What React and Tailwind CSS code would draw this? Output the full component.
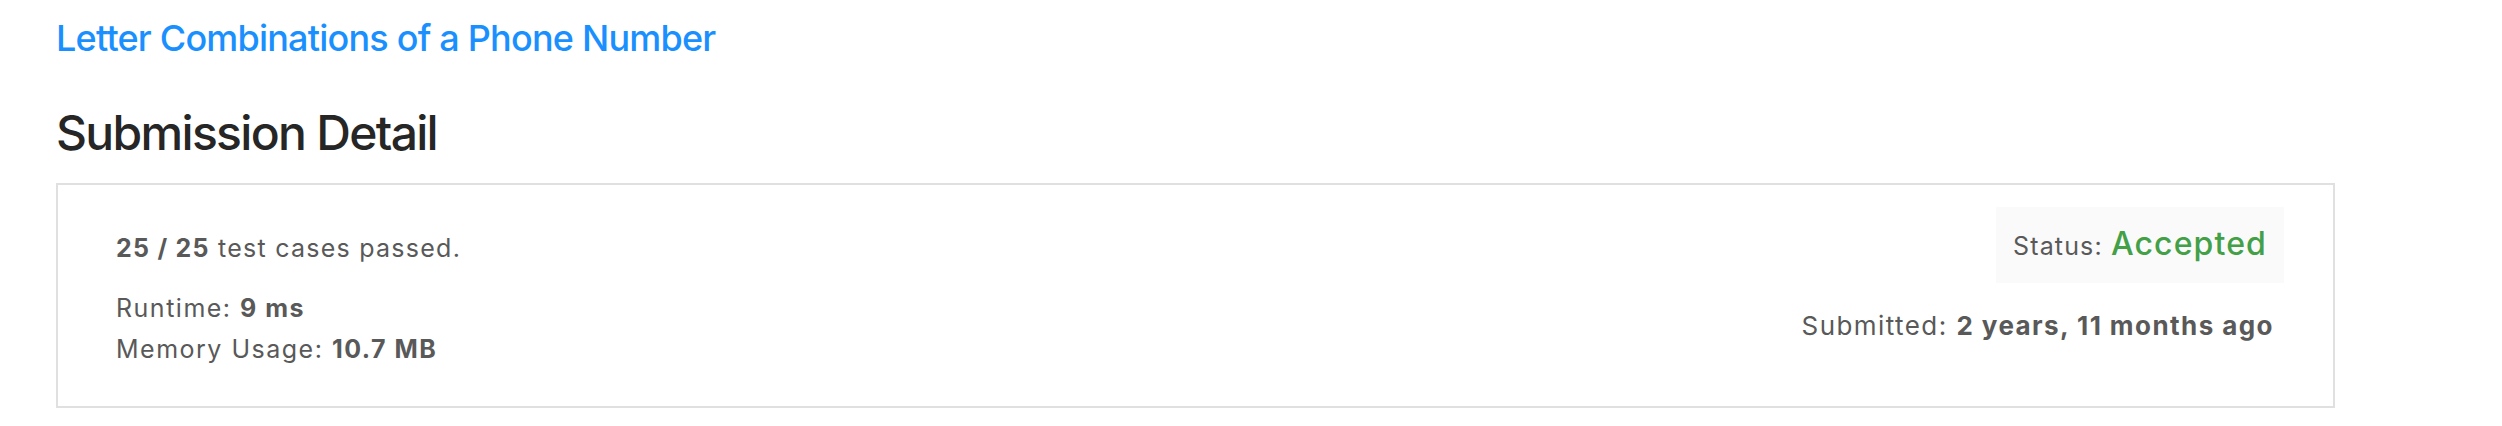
import React from "react";

const submission = {
  problem: "Letter Combinations of a Phone Number",
  passed: 25,
  total: 25,
  runtime: "9 ms",
  memory: "10.7 MB",
  status: "Accepted",
  submitted: "2 years, 11 months ago",
};

export default function App() {
  return (
    <div className="min-h-[426px] w-[2502px] bg-white pt-4 pl-[56px] font-['Inter','Liberation_Sans',sans-serif]">
      {/* Problem link */}
      <a
        href="#"
        className="block text-[36px] leading-[44px] font-medium tracking-[-0.022em] text-[#1a90ff]"
      >
        {submission.problem}
      </a>

      {/* Heading */}
      <h1 className="mt-[44px] text-[48px] leading-[58px] font-medium tracking-[-0.035em] text-[#262626]">
        Submission Detail
      </h1>

      {/* Detail panel */}
      <div className="mt-[21px] flex w-[2279px] items-start justify-between border-2 border-[#e0e0e0] pt-[22px] pr-[49px] pb-[36px] pl-[58px] text-[#595959]">
        <div className="mt-[25px]">
          <div className="text-[25px] leading-[32px] tracking-[0.05em]">
            <span className="font-bold">
              {submission.passed} / {submission.total}
            </span>{" "}
            test cases passed.
          </div>
          <div className="mt-[24px] text-[25px] leading-[41px] tracking-[0.06em]">
            <div>
              Runtime: <span className="font-bold">{submission.runtime}</span>
            </div>
            <div>
              Memory Usage: <span className="font-bold">{submission.memory}</span>
            </div>
          </div>
        </div>

        <div className="flex flex-col items-end">
          <div className="flex h-[76px] items-center bg-[#fafafa] px-[17px]">
            <div className="text-[25px] leading-[40px] tracking-[0.045em]">
              Status:{" "}
              <span className="text-[32px] font-medium text-[#43a047]">
                {submission.status}
              </span>
            </div>
          </div>
          <div className="mt-[25px] pr-[10px] text-[26px] leading-[36px] tracking-[0.055em]">
            Submitted: <span className="font-bold">{submission.submitted}</span>
          </div>
        </div>
      </div>
    </div>
  );
}
